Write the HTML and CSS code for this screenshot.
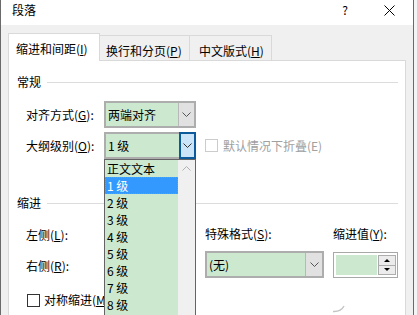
FILE: index.html
```html
<!DOCTYPE html>
<html lang="zh-CN">
<head>
  <meta charset="UTF-8" />
  <title>段落</title>
  <link rel="stylesheet" href="styles.css">
</head>
<body>

  <div class="window">
    <div class="titlebar">
      <span class="title">段落</span>
      <span class="help">?</span>
      <svg class="close" width="11" height="11" viewBox="0 0 11 11">
        <path d="M0.5 0.5 L10.5 10.5 M10.5 0.5 L0.5 10.5" stroke="#000" stroke-width="1" fill="none"/>
      </svg>
    </div>

    <div class="tabs">
      <div class="tab active">缩进和间距(<u>I</u>)</div>
      <div class="tab tab2">换行和分页(<u>P</u>)</div>
      <div class="tab tab3">中文版式(<u>H</u>)</div>
    </div>

    <div class="panel">
      <div class="group-title">常规</div>

      <div class="row first">
        <span class="lbl">对齐方式(<u>G</u>):</span>
        <div class="combo">
          <span class="value">两端对齐</span>
          <span class="btn">
            <svg width="9" height="5" viewBox="0 0 9 5"><path d="M0.5 0.5 L4.5 4.5 L8.5 0.5" stroke="#555" fill="none"/></svg>
          </span>
        </div>
      </div>

      <div class="row">
        <span class="lbl">大纲级别(<u>O</u>):</span>
        <div class="combo open">
          <span class="value">1 级</span>
          <span class="btn">
            <svg width="9" height="5" viewBox="0 0 9 5"><path d="M0.5 0.5 L4.5 4.5 L8.5 0.5" stroke="#333" fill="none"/></svg>
          </span>
          <div class="droplist">
            <ul>
              <li>正文文本</li>
              <li class="selected">1 级</li>
              <li>2 级</li>
              <li>3 级</li>
              <li>4 级</li>
              <li>5 级</li>
              <li>6 级</li>
              <li>7 级</li>
              <li>8 级</li>
            </ul>
            <div class="scroll">
              <svg width="9" height="5" viewBox="0 0 9 5"><path d="M0.5 4.5 L4.5 0.5 L8.5 4.5" stroke="#b0b0b0" fill="none"/></svg>
            </div>
          </div>
        </div>
        <span class="check disabled"></span>
        <span class="muted">默认情况下折叠(E)</span>
      </div>

      <div class="group-title second">缩进</div>

      <div class="indent">
        <div class="indent-left">
          <div class="line">左侧(<u>L</u>):</div>
          <div class="line gap">右侧(<u>R</u>):</div>
          <div class="line check-line"><span class="check"></span>对称缩进(<u>M</u>)</div>
        </div>

        <div class="col special">
          <div class="line up">特殊格式(<u>S</u>):</div>
          <div class="combo wide">
            <span class="value">(无)</span>
            <span class="btn">
              <svg width="9" height="5" viewBox="0 0 9 5"><path d="M0.5 0.5 L4.5 4.5 L8.5 0.5" stroke="#555" fill="none"/></svg>
            </span>
          </div>
        </div>

        <div class="col">
          <div class="line up">缩进值(<u>Y</u>):</div>
          <div class="spin">
            <span class="spin-value"></span>
            <span class="spin-btns">
              <span class="arrow-up"></span>
              <span class="arrow-down"></span>
            </span>
          </div>
          <svg class="smudge" width="12" height="8" viewBox="0 0 12 8"><path d="M0 6.5 Q8 7 11 1" stroke="#c4c4c4" stroke-width="1.4" fill="none"/></svg>
        </div>
      </div>
    </div>
  </div>

</body>
</html>
```

FILE: styles.css
```css
body {
  margin: 0;
  background: #f4f4f4;
  font-family: "Noto Sans CJK SC", "Noto Sans", sans-serif;
  font-size: 12px;
  color: #000;
  overflow: hidden;
  height: 315px;
}

u {
  text-decoration: underline;
  text-underline-offset: 1px;
}

.window {
  width: 412px;
  height: 315px;
  overflow: hidden;
  background: #f0f0f0;
  border-left: 1px solid #6a6a6a;
  border-right: 1px solid #6a6a6a;
}

.titlebar {
  height: 25px;
  background: white;
  display: flex;
  align-items: flex-start;
  padding-top: 2px;
  box-sizing: border-box;
  line-height: 16px;
}

.title {
  margin-left: 11px;
}

.help {
  margin-left: auto;
}

.close {
  margin: 3px 18px 0 36px;
}

.tabs {
  display: flex;
  align-items: flex-end;
  padding: 8px 0 0 7px;
  line-height: 16px;
}

.tab {
  height: 25px;
  box-sizing: border-box;
  padding: 7px 0 0 6px;
  background: #f0f0f0;
  border: 1px solid #d9d9d9;
  border-left: none;
  border-bottom: none;
}

.tab.active {
  width: 92px;
  height: 28px;
  padding: 7px 0 0 7px;
  margin-bottom: -1px;
  background: white;
  border-left: 1px solid #d9d9d9;
  position: relative;
  z-index: 1;
}

.tab2 {
  width: 90px;
}

.tab3 {
  width: 82px;
  padding-left: 9px;
}

.panel {
  margin: 0 7px;
  height: 300px;
  background: white;
  border: 1px solid #d9d9d9;
  padding-top: 13px;
  box-sizing: border-box;
}

.group-title {
  display: flex;
  align-items: center;
  line-height: 16px;
  padding-left: 8px;
  margin-right: 7px;
}

.group-title::after {
  content: "";
  flex: 1;
  height: 1px;
  background: #dcdcdc;
  margin-left: 6px;
}

.group-title.second {
  margin-top: 36px;
}

.row {
  display: flex;
  align-items: center;
  padding-left: 17px;
  margin-top: 4px;
}

.row.first {
  margin-top: 11px;
}

.lbl {
  width: 78px;
  line-height: 16px;
}

.combo {
  width: 92px;
  height: 27px;
  box-sizing: border-box;
  border: 2px solid #adadad;
  display: flex;
  position: relative;
  background: #cce8cf;
}

.combo .value {
  flex: 1;
  padding-left: 2px;
  line-height: 23px;
}

.combo .btn {
  width: 15px;
  background: #e1e1e1;
  border-left: 1px solid #b8b8b8;
  display: flex;
  align-items: center;
  justify-content: center;
}

.combo.open .btn {
  width: 13px;
  margin: -2px -2px -2px 0;
  border: 2px solid #0a5a9c;
  background: #cce4f7;
}

.combo.wide {
  width: 119px;
}

.combo.wide .btn {
  width: 16px;
}

.droplist {
  position: absolute;
  top: 25px;
  left: -2px;
  width: 92px;
  height: 170px;
  box-sizing: border-box;
  border: 1px solid #646464;
  background: #cce8cf;
  display: flex;
  z-index: 5;
}

.droplist ul {
  list-style: none;
  margin: 0;
  padding: 0;
  flex: 1;
}

.droplist li {
  height: 17px;
  line-height: 17px;
  padding-left: 2px;
  box-sizing: border-box;
}

.droplist li.selected {
  background: #3399ff;
  color: white;
  outline: 1px dotted #d9823f;
  outline-offset: -1px;
}

.droplist .scroll {
  width: 17px;
  background: #f0f0f0;
  display: flex;
  justify-content: center;
  padding-top: 6px;
  box-sizing: border-box;
}

.droplist .scroll svg {
  display: block;
}

.check {
  display: inline-block;
  width: 13px;
  height: 13px;
  box-sizing: border-box;
  border: 1px solid #333;
  background: white;
}

.check.disabled {
  border-color: #cccccc;
  margin-left: 9px;
}

.muted {
  color: #a0a0a0;
  margin-left: 5px;
  line-height: 16px;
}

.indent {
  display: flex;
  margin-top: 16px;
}

.indent-left {
  width: 179px;
  padding-left: 17px;
}

.line {
  line-height: 16px;
  height: 16px;
}

.line.gap {
  margin-top: 15px;
}

.line.up {
  margin-top: -1px;
}

.check-line {
  display: flex;
  align-items: center;
  margin-top: 18px;
  padding-left: 1px;
  white-space: nowrap;
}

.check-line .check {
  margin-right: 4px;
}

.col {
  display: flex;
  flex-direction: column;
}

.col.special {
  width: 128px;
}

.col.special .combo {
  margin-top: 9px;
}

.spin {
  margin-top: 10px;
  width: 65px;
  height: 26px;
  box-sizing: border-box;
  border: 1px solid #a8a8a8;
  padding: 2px 1px 2px 2px;
  background: white;
  display: flex;
  gap: 1px;
}

.spin-value {
  flex: 1;
  background: #cce8cf;
}

.spin-btns {
  width: 16px;
  display: flex;
  flex-direction: column;
  border: 1px solid #adadad;
}

.spin-btns span {
  flex: 1;
  background: #ececec;
  display: flex;
  align-items: center;
  justify-content: center;
}

.spin-btns .arrow-up {
  border-bottom: 1px solid #adadad;
}

.spin-btns .arrow-up::before {
  content: "";
  border: 3px solid transparent;
  border-bottom: 3px solid #000;
  border-top: none;
}

.spin-btns .arrow-down::before {
  content: "";
  border: 3px solid transparent;
  border-top: 3px solid #000;
  border-bottom: none;
}

.smudge {
  margin: 27px 0 0 0;
}
```
